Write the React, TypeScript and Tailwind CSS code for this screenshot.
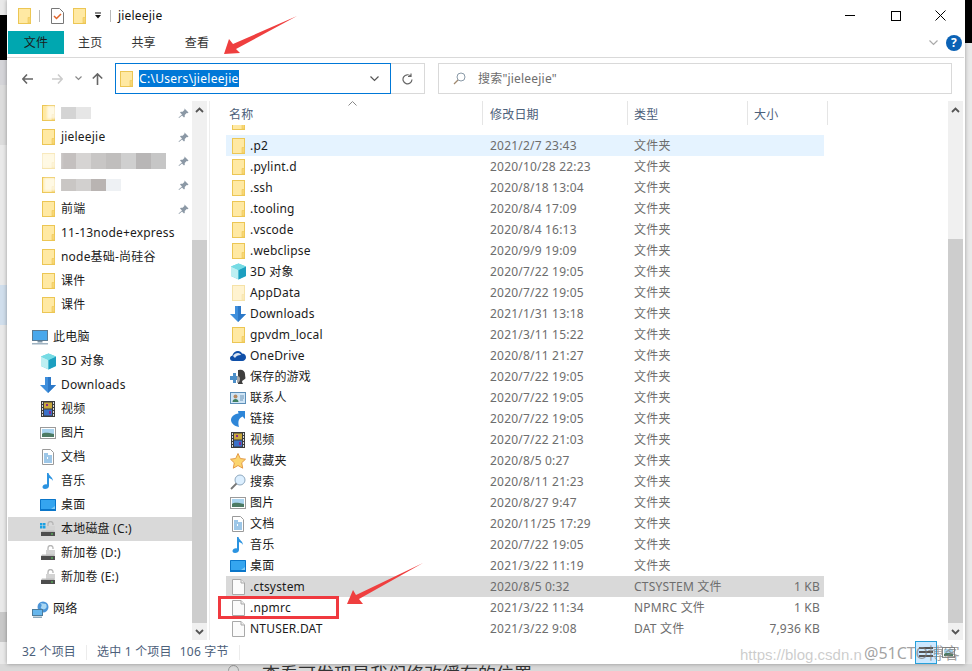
import React from "react";

const Folder = ({ faded = false }: { faded?: boolean }) => (
  <svg width="13" height="16" viewBox="0 0 13 16" className={faded ? "opacity-50" : ""}>
    <rect x="0.5" y="0.5" width="12" height="15" fill="#ffe9a3" stroke="#ecc654" />
    <path d="M10 15V9.5h2.5V15z" fill="#f8d775" stroke="#ecc654" strokeWidth="0.6" />
  </svg>
);
const FileIc = () => (
  <svg width="13" height="16" viewBox="0 0 13 16">
    <path d="M.5.5h8.5l3.5 3.5v11.500H.5z" fill="#fbfbfb" stroke="#a9a9a9" />
    <path d="M9 .5V4h3.500" fill="#eee" stroke="#a9a9a9" />
  </svg>
);
const Cube = () => (
  <svg width="17" height="17" viewBox="0 0 17 17">
    <path d="M8.500.5 16 3.500v9.500l-7.500 3.500L1 13V3.500z" fill="#5ed0de" />
    <path d="M1 3.500 8.500 7v9.500L1 13z" fill="#bdeff2" />
    <path d="M8.500 7 16 3.500V13l-7.500 3.500z" fill="#1c9fc0" />
    <path d="M8.500.5 16 3.500 8.500 7 1 3.500z" fill="#76dbe4" />
  </svg>
);
const Download = () => (
  <svg width="16" height="16" viewBox="0 0 16 16">
    <path d="M5 0h6v8h5l-8 8-8-8h5z" fill="#3f8fdc" />
    <path d="M8 0h3v8h5l-8 8z" fill="#2c78c8" />
  </svg>
);
const Film = () => (
  <svg width="14" height="16" viewBox="0 0 14 16">
    <rect width="14" height="16" fill="#3c3c3c" />
    <rect x="3" y="1.500" width="8" height="6" fill="#c9a83c" />
    <rect x="3" y="8.500" width="8" height="6" fill="#3c70c8" />
    <path d="M5 3h2v2H5zM8 10h2v3H8z" fill="#8a2a8a" />
    <path d="M1 1h1v2H1zm0 3h1v2H1zm0 3h1v2H1zm0 3h1v2H1zm0 3h1v2H1zM12 1h1v2h-1zm0 3h1v2h-1zm0 3h1v2h-1zm0 3h1v2h-1zm0 3h1v2h-1z" fill="#ddd" />
  </svg>
);
const Pic = () => (
  <svg width="16" height="12" viewBox="0 0 16 12">
    <rect x="0.500" y="0.500" width="15" height="11" fill="#fff" stroke="#9a9a9a" />
    <rect x="2" y="2" width="12" height="8" fill="#a9d3ee" />
    <path d="M2 7c3-2 6-1 12 0v3H2z" fill="#4c7a63" />
  </svg>
);
const Doc = () => (
  <svg width="12" height="16" viewBox="0 0 12 16">
    <path d="M.5.5h8l3 3v12H.5z" fill="#fff" stroke="#9a9a9a" />
    <path d="M2 5h4M2 7h8M2 9h3M6 9h4M2 11h8M2 13h8" stroke="#3d8fd0" />
  </svg>
);
const Music = () => (
  <svg width="12" height="16" viewBox="0 0 12 16">
    <path d="M5 0h1.500c.5 3 4.500 4 4.500 8-1-2-2.500-2.500-4-3v8c0 2-2 3-4 3-1.500 0-2.500-.8-2.500-2 0-2 2.500-3.200 4.500-2.600z" fill="#2b93e0" />
  </svg>
);
const Desk = () => (
  <svg width="16" height="12" viewBox="0 0 16 12">
    <rect width="16" height="12" rx="0.500" fill="#0a76c9" />
    <rect x="1" y="1" width="14" height="9" fill="#35a5ef" />
    <path d="M11 10h4V7z" fill="#7fcaf5" />
  </svg>
);
const Computer = () => (
  <svg width="16" height="15" viewBox="0 0 16 15">
    <rect x="0.500" y="0.500" width="15" height="10" fill="#49a8ec" stroke="#5b7a92" />
    <rect x="5.500" y="11" width="5" height="1.500" fill="#7b93a5" />
    <rect y="13" width="16" height="1.500" fill="#9fb3c2" />
  </svg>
);
const Drive = ({ win = false }: { win?: boolean }) => (
  <svg width="16" height="16" viewBox="0 0 16 16">
    {win ? (
      <path d="M0 2h2.500v2.500H0zM3 2h2.500v2.500H3zM0 5h2.500v2.500H0zM3 5h2.500v2.500H3z" fill="#19a0e3" />
    ) : null}
    <path d="M8 6V3a2.500 2.500 0 0 1 5 0v1" fill="none" stroke="#b5b5b5" strokeWidth="1.300" />
    <rect x="6" y="5" width="9" height="5" fill="#d3d3d3" />
    <path d="M1 11h14v4H1z" fill="#4d4d4d" />
    <path d="M2 9.500h12l1 1.500H1z" fill="#bdbdbd" />
    <rect x="11" y="12.500" width="2" height="1" fill="#5ed25e" />
  </svg>
);
const Network = () => (
  <svg width="17" height="17" viewBox="0 0 17 17">
    <circle cx="11" cy="6" r="5.500" fill="#4a94d8" />
    <path d="M8 2c2 1 2 3 1 4s2 3 4 2 2-3 1-5z" fill="#a9d7f3" />
    <rect x="0.500" y="8.500" width="10" height="6" fill="#66b6ec" stroke="#4d7c9c" />
    <rect x="1" y="15.500" width="9" height="1.500" fill="#8da9bb" />
  </svg>
);
const Cloud = () => (
  <svg width="16" height="11" viewBox="0 0 16 11">
    <path d="M3 11C1 11 0 9.800 0 8.300 0 6.800 1 6 2.300 5.800 3 3 5.300 1 8 1c2 0 3.400 1 4 2.500 2.300 0 4 1.500 4 3.800 0 2-1.500 3.700-3.700 3.700z" fill="#0f4fa8" />
    <path d="M3 6c1-2 3-3 5-3 1.500 0 2.700 1 3 2-3 0-5 1-6 3z" fill="#fff" opacity="0.850" />
  </svg>
);
const Games = () => (
  <svg width="16" height="16" viewBox="0 0 16 16">
    <path d="M0 7h3V4h3v3h2v4H6v3H3v-3H0z" fill="#4c8fc9" />
    <path d="M9 1c3-1 6 1 6 4s1 4 0 5-3 1-3 3l1 2H8V1z" fill="#3f3f3f" />
    <path d="M7 7c2 0 3 1 3 3s-1 4-3 4z" fill="#a9a9a9" />
  </svg>
);
const Contact = () => (
  <svg width="16" height="12" viewBox="0 0 16 12">
    <rect x="0.500" y="0.500" width="15" height="11" fill="#cfe5f6" stroke="#5d8fb8" />
    <circle cx="5.500" cy="4.500" r="2" fill="#b58a64" />
    <path d="M2.500 10c0-2 1.500-3 3-3s3 1 3 3z" fill="#3f7f5f" />
    <path d="M10 4h4M10 6h4M10 8h3" stroke="#6c93b5" />
  </svg>
);
const LinkIc = () => (
  <svg width="14" height="16" viewBox="0 0 14 16">
    <path d="M7 0h7v8l-2.500-2.500C8 7 6.500 10 8 16 3 15 0 12 0 9c0-3 3-6 7.500-6.500z" fill="#2e86d8" />
  </svg>
);
const Star = () => (
  <svg width="16" height="16" viewBox="0 0 16 16">
    <path d="m8 .5 2.300 5 5.200.7-3.800 3.600 1 5.400L8 12.500l-4.700 2.700 1-5.400L.5 6.200l5.200-.7z" fill="#fbd56f" stroke="#e49a47" />
  </svg>
);
const Lens = () => (
  <svg width="16" height="16" viewBox="0 0 16 16">
    <circle cx="10" cy="6" r="5" fill="#dcefff" stroke="#8fa9bf" />
    <path d="M6.500 9.500 1 15" stroke="#777" strokeWidth="1.800" />
  </svg>
);

type Row = { i: React.ReactNode; n: string; d: string; t: string; s?: string; bg?: string };
const f = <Folder />;
const rows: Row[] = [
  { i: f, n: ".p2", d: "2021/2/7 23:43", t: "文件夹", bg: "bg-[#e5f3ff]" },
  { i: f, n: ".pylint.d", d: "2020/10/28 22:23", t: "文件夹" },
  { i: f, n: ".ssh", d: "2020/8/18 13:04", t: "文件夹" },
  { i: f, n: ".tooling", d: "2020/8/4 17:09", t: "文件夹" },
  { i: f, n: ".vscode", d: "2020/8/4 16:13", t: "文件夹" },
  { i: f, n: ".webclipse", d: "2020/9/9 19:09", t: "文件夹" },
  { i: <Cube />, n: "3D 对象", d: "2020/7/22 19:05", t: "文件夹" },
  { i: <Folder faded />, n: "AppData", d: "2020/7/22 19:05", t: "文件夹" },
  { i: <Download />, n: "Downloads", d: "2021/1/31 13:18", t: "文件夹" },
  { i: f, n: "gpvdm_local", d: "2021/3/11 15:22", t: "文件夹" },
  { i: <Cloud />, n: "OneDrive", d: "2020/8/11 21:27", t: "文件夹" },
  { i: <Games />, n: "保存的游戏", d: "2020/7/22 19:05", t: "文件夹" },
  { i: <Contact />, n: "联系人", d: "2020/7/22 19:05", t: "文件夹" },
  { i: <LinkIc />, n: "链接", d: "2020/7/22 19:05", t: "文件夹" },
  { i: <Film />, n: "视频", d: "2020/7/22 21:03", t: "文件夹" },
  { i: <Star />, n: "收藏夹", d: "2020/8/5 0:27", t: "文件夹" },
  { i: <Lens />, n: "搜索", d: "2020/8/11 21:23", t: "文件夹" },
  { i: <Pic />, n: "图片", d: "2020/8/27 9:47", t: "文件夹" },
  { i: <Doc />, n: "文档", d: "2020/11/25 17:29", t: "文件夹" },
  { i: <Music />, n: "音乐", d: "2020/7/22 19:05", t: "文件夹" },
  { i: <Desk />, n: "桌面", d: "2021/3/22 11:19", t: "文件夹" },
  { i: <FileIc />, n: ".ctsystem", d: "2020/8/5 0:32", t: "CTSYSTEM 文件", s: "1 KB", bg: "bg-[#d9d9d9]" },
  { i: <FileIc />, n: ".npmrc", d: "2021/3/22 11:34", t: "NPMRC 文件", s: "1 KB" },
  { i: <FileIc />, n: "NTUSER.DAT", d: "2021/3/22 9:08", t: "DAT 文件", s: "7,936 KB" },
];

const Pin = () => (
  <svg width="11" height="11" viewBox="0 0 11 11" className="ml-auto mr-[3px]">
    <path d="M6.500.5l4 4-1 .7-.8-.3-2 2 .1 1.800-.8.800-2-2L1 10 .5 9.500l3.500-3-2-2 .8-.8 1.800.1 2-2-.3-.8z" fill="#8b98a5" />
  </svg>
);
const Patch = ({ c, h }: { c: string[]; h: string }) => (
  <div className={`flex ${h}`}>
    {c.map((x, i) => (
      <div key={i} className="w-[15px] h-full" style={{ background: x }} />
    ))}
  </div>
);

const NavRow = ({ icon, label, pin, sel, top }: { icon: React.ReactNode; label?: React.ReactNode; pin?: boolean; sel?: boolean; top?: boolean }) => (
  <div className={`relative h-6 flex items-center shrink-0 ml-px ${top ? "pl-[24px]" : "pl-[32px]"} ${sel ? "bg-[#d9d9d9]" : ""}`}>
    <div className="w-[16px] flex justify-center shrink-0 [&>svg]:shrink-0">{icon}</div>
    <div className="ml-[5px] whitespace-nowrap">{label}</div>
    {pin ? <Pin /> : null}
  </div>
);

const Chevron = ({ up }: { up?: boolean }) => (
  <svg width="9" height="6" viewBox="0 0 9 6">
    <path d={up ? "M1 5l3.500-3.500L8 5" : "M1 1l3.500 3.500L8 1"} fill="none" stroke="#555" strokeWidth="1.800" />
  </svg>
);

export default function App() {
  return (
    <div
      className="relative w-[972px] h-[671px] overflow-hidden bg-[#e9e9e9] text-[12px] tracking-[0.2px] text-[#1b1b1b]"
      style={{ fontFamily: '"Noto Sans","Noto Sans CJK SC",sans-serif' }}
    >
      {/* what lies behind the window */}
      <div className="absolute left-0 top-[15px] w-[7px] h-[45px] bg-black" />
      <div className="absolute left-0 top-[60px] w-[7px] h-[25px] bg-[#d4d4d8]" />
      <div className="absolute left-0 top-[85px] w-[7px] h-[60px] bg-[#dcdcdc]" />
      <div className="absolute left-0 top-[285px] w-[7px] h-[40px] bg-[#d0deec]" />
      <div className="absolute left-0 top-[612px] w-[7px] h-[30px] bg-[#c8c8c8]" />
      <div className="absolute right-0 top-0 w-[7px] h-[43px] bg-black" />
      <div className="absolute left-0 right-0 bottom-0 h-[7px] bg-[#d9d9d9]" />
      <div className="absolute left-[228px] top-[665px] w-[11px] h-[11px] rounded-full border border-[#9a9a9a]" />
      <div className="absolute left-[262px] top-[662px] text-[18px] leading-[24px] tracking-normal whitespace-nowrap text-[#333]">查看可发现是我们修改缓存的位置</div>

      <div className="relative ml-[7px] w-[958px] h-[664px] bg-white shadow-[0_0_4px_rgba(0,0,0,0.35)] flex flex-col">
        {/* title bar */}
        <div className="h-[31px] flex items-center pl-[11px] shrink-0">
          <Folder />
          <div className="ml-[8px] w-px h-[12px] bg-[#b9b9b9]" />
          <svg width="13" height="16" viewBox="0 0 13 16" className="ml-[11px]">
            <path d="M.5.5h8l4 4v11H.5z" fill="#fff" stroke="#777" />
            <path d="M3 8l2.500 2.500L10 6" fill="none" stroke="#e0642a" strokeWidth="1.500" />
          </svg>
          <div className="ml-[9px]"><Folder /></div>
          <svg width="8" height="8" viewBox="0 0 8 8" className="ml-[8px]">
            <path d="M1 1h6" stroke="#111" />
            <path d="M1 3h6L4 6.500z" fill="#111" />
          </svg>
          <div className="ml-[8px] w-px h-[12px] bg-[#b9b9b9]" />
          <div className="ml-[7px] text-[#111]">jieleejie</div>
          <div className="ml-auto flex items-center">
            <div className="w-[46px] flex justify-center"><div className="w-[10px] h-px bg-black" /></div>
            <div className="w-[45px] flex justify-center"><div className="w-[10px] h-[10px] border border-black" /></div>
            <div className="w-[45px] flex justify-center mr-[2px]">
              <svg width="11" height="11" viewBox="0 0 11 11"><path d="M.5.5l10 10M10.500.5l-10 10" stroke="#000" /></svg>
            </div>
          </div>
        </div>
        {/* ribbon */}
        <div className="h-[27px] flex items-start shrink-0 border-b border-[#d9d9d9] mr-[1px]">
          <div className="ml-px w-[56px] h-[23px] bg-[#00a7b0] flex items-center justify-center">文件</div>
          <div className="h-[23px] flex items-center ml-[14px] text-[#333]">主页</div>
          <div className="h-[23px] flex items-center ml-[29px] text-[#333]">共享</div>
          <div className="h-[23px] flex items-center ml-[29px] text-[#333]">查看</div>
          <div className="ml-auto mr-[2px] h-[23px] flex items-center gap-[8px]">
            <svg width="9" height="6" viewBox="0 0 9 6"><path d="M.5.500l4 4 4-4" fill="none" stroke="#aaa" strokeWidth="1.200" /></svg>
            <div className="w-4 h-4 rounded-full bg-[#0b62b5] text-white font-bold text-[12px] leading-4 text-center">?</div>
          </div>
        </div>
        {/* address row */}
        <div className="h-[31px] mt-[5px] flex items-center shrink-0 relative">
          <svg width="11" height="10" viewBox="0 0 11 10" className="ml-[15px]"><path d="M5 .500.8 5 5 9.500M1 5h10" fill="none" stroke="#666" strokeWidth="1.600" /></svg>
          <svg width="11" height="10" viewBox="0 0 11 10" className="ml-[19px]"><path d="M6 .500 10.200 5 6 9.500M10 5H0" fill="none" stroke="#ccc" strokeWidth="1.600" /></svg>
          <svg width="7" height="5" viewBox="0 0 7 5" className="ml-[12px]"><path d="M.5.500l3 3 3-3" fill="none" stroke="#888" strokeWidth="1.200" /></svg>
          <svg width="11" height="12" viewBox="0 0 11 12" className="ml-[10px]"><path d="M.8 5.500 5.500.9l4.700 4.600M5.500 1v11" fill="none" stroke="#666" strokeWidth="1.600" /></svg>
          <div className="ml-[12px] w-[276px] h-[31px] border border-[#0078d7] flex items-center pl-[4px]">
            <Folder />
            <div className="ml-[6px] bg-[#0078d7] text-white leading-[17px] tracking-[0.3px]">C:\Users\jieleejie</div>
            <svg width="9" height="6" viewBox="0 0 9 6" className="ml-auto mr-[11px]"><path d="M.5.500l4 4 4-4" fill="none" stroke="#555" strokeWidth="1.200" /></svg>
          </div>
          <div className="w-[34px] h-[31px] border border-l-0 border-[#d9d9d9] flex items-center justify-center">
            <svg width="11" height="12" viewBox="0 0 11 12"><path d="M8.800 3.200A4.500 4.500 0 1 0 10 6.500M9 .5v3H6" fill="none" stroke="#666" strokeWidth="1.200" /></svg>
          </div>
          <div className="ml-[13px] w-[514px] h-[31px] border border-[#d9d9d9] flex items-center pl-[14px] text-[#6d6d6d]">
            <svg width="13" height="13" viewBox="0 0 13 13"><circle cx="8" cy="5" r="4" fill="none" stroke="#8a9aa8" /><path d="M5 8l-4 4" stroke="#a08a70" strokeWidth="1.300" /></svg>
            <span className="ml-[12px]">搜索"jieleejie"</span>
          </div>
        </div>
        {/* body */}
        <div className="flex-1 min-h-0 flex mt-[7px]">
          <div className="w-[185px] shrink-0 overflow-hidden">
            <NavRow icon={<Folder />} label={<Patch h="h-[12px]" c={["#d4d4d4", "#e6e6e6"]} />} pin />
            <NavRow icon={<Folder />} label="jieleejie" pin />
            <NavRow icon={<Folder />} label={<Patch h="h-[16px] blur-[0.6px]" c={["#c4c0bf", "#d6d4d3", "#c8c6c5", "#c0bebd", "#cfcfcf", "#b8b6b6", "#c6c6c6"]} />} pin />
            <NavRow icon={<Folder />} label={<Patch h="h-[12px] blur-[0.6px]" c={["#c9c6c4", "#d2d0cf", "#b9b4b2", "#eef1f4"]} />} pin />
            <NavRow icon={<Folder />} label="前端" pin />
            <NavRow icon={<Folder />} label="11-13node+express" />
            <NavRow icon={<Folder />} label="node基础-尚硅谷" />
            <NavRow icon={<Folder />} label="课件" />
            <NavRow icon={<Folder />} label="课件" />
            <div className="h-2" />
            <NavRow top icon={<Computer />} label="此电脑" />
            <NavRow icon={<Cube />} label="3D 对象" />
            <NavRow icon={<Download />} label="Downloads" />
            <NavRow icon={<Film />} label="视频" />
            <NavRow icon={<Pic />} label="图片" />
            <NavRow icon={<Doc />} label="文档" />
            <NavRow icon={<Music />} label="音乐" />
            <NavRow icon={<Desk />} label="桌面" />
            <NavRow sel icon={<Drive win />} label="本地磁盘 (C:)" />
            <NavRow icon={<Drive />} label="新加卷 (D:)" />
            <NavRow icon={<Drive />} label="新加卷 (E:)" />
            <div className="h-2" />
            <NavRow top icon={<Network />} label="网络" />
          </div>
          {/* nav scrollbar */}
          <div className="w-[15px] shrink-0 bg-[#f0f0f0] flex flex-col h-[539px]">
            <div className="h-[17px] flex items-center justify-center"><Chevron up /></div>
            <div className="h-[122px]" />
            <div className="flex-1 bg-[#cdcdcd]" />
            <div className="h-[17px] flex items-center justify-center"><Chevron /></div>
          </div>
          <div className="w-[3px] shrink-0 border-r border-[#ededed]" />
          {/* file list */}
          <div className="flex-1 min-w-0 flex flex-col h-[539px] relative">
            <div className="h-[24px] flex items-center shrink-0 text-[#4c607a]">
              <div className="w-[273px] pl-[19px] pt-[3px] h-full flex items-center border-r border-[#e5e5e5] relative">
                名称
                <svg width="9" height="5" viewBox="0 0 9 5" className="absolute left-[138px] top-0"><path d="M.5 4.500l4-4 4 4" fill="none" stroke="#888" /></svg>
              </div>
              <div className="w-[145px] pl-[7px] pt-[3px] h-full flex items-center border-r border-[#e5e5e5]">修改日期</div>
              <div className="w-[120px] pl-[6px] pt-[3px] h-full flex items-center border-r border-[#e5e5e5]">类型</div>
              <div className="w-[80px] pl-[6px] pt-[3px] h-full flex items-center border-r border-[#e5e5e5]">大小</div>
            </div>
            <div className="h-[10px] shrink-0 overflow-hidden relative">
              <div className="absolute left-[22px] -top-[11px]"><Folder /></div>
            </div>
            {rows.map((r) => (
              <div key={r.n} className={`h-[21px] shrink-0 flex items-center ml-[16px] w-[598px] ${r.bg ?? ""}`}>
                <div className="w-[24px] flex justify-center [&>svg]:shrink-0">{r.i}</div>
                <div className="w-[240px] whitespace-nowrap">{r.n}</div>
                <div className="w-[144px] text-[#6d6d6d] whitespace-nowrap">{r.d}</div>
                <div className="w-[110px] text-[#6d6d6d] whitespace-nowrap">{r.t}</div>
                <div className="w-[76px] text-right text-[#6d6d6d] whitespace-nowrap">{r.s}</div>
              </div>
            ))}
          </div>
          {/* list scrollbar */}
          <div className="w-[15px] shrink-0 bg-[#f0f0f0] flex flex-col h-[539px] mr-[2px]">
            <div className="h-[17px] flex items-center justify-center"><Chevron up /></div>
            <div className="h-[121px]" />
            <div className="flex-1 bg-[#cdcdcd]" />
            <div className="h-[17px] flex items-center justify-center"><Chevron /></div>
          </div>
        </div>
        {/* status */}
        <div className="h-[24px] shrink-0 flex items-center pl-[15px] text-[#4c607a]">
          <span>32 个项目</span>
          <div className="ml-[10px] w-px h-[15px] bg-[#ececec]" />
          <span className="ml-[10px]">选中 1 个项目</span>
          <span className="ml-[8px]">106 字节</span>
          <div className="ml-[10px] w-px h-[15px] bg-[#ececec]" />
          <div className="ml-auto mr-[10px] flex items-center gap-[5px]">
            <div className="w-[22px] h-[23px] bg-[#cce8ff] border border-[#26a0da] flex flex-col justify-center gap-[2px] items-center">
              <div className="w-[14px] h-[2px] bg-[#555]" /><div className="w-[14px] h-[2px] bg-[#555]" /><div className="w-[14px] h-[2px] bg-[#555]" />
            </div>
            <svg width="13" height="11" viewBox="0 0 13 11">
              <rect x="0.500" y="0.500" width="12" height="10" fill="#fff" stroke="#8a8a8a" />
              <path d="M2 7c3-2 5-1 9 0v2H2z" fill="#4c7a63" />
              <rect x="2" y="2" width="9" height="4" fill="#a9d3ee" />
            </svg>
          </div>
        </div>
      </div>

      {/* annotations and watermark, lying over the window */}
      <div className="absolute left-[36px] top-[151px] w-[24px] h-[19px] bg-white/70 blur-[2px]" />
      <div className="absolute left-[44px] top-[178px] w-[16px] h-[13px] bg-white/70 blur-[1px]" />
      <div className="absolute left-[47px] top-[106px] w-[13px] h-[13px] bg-white/70 blur-[1px]" />
      <div className="absolute left-[218px] top-[596px] w-[121px] h-[23px] border-[3px] border-[#f0393f]" />
      <svg className="absolute left-0 top-0 pointer-events-none" width="972" height="671">
        <path d="M297 16 233 44l-4-5-5 15 16-1-4-4z" fill="#ef3f3f" />
        <path d="M423 563 356 595l-3-5-6 14 16 0-4-5z" fill="#ef3f3f" />
      </svg>
      <div className="absolute left-[740px] top-[644px] text-[15px] tracking-normal text-[#9a9a9a]/50 whitespace-nowrap" style={{ fontFamily: '"Liberation Sans",sans-serif' }}>https://blog.csdn.n</div>
      <div className="absolute left-[864px] top-[641px] text-[16px] tracking-normal text-[#7a7a7a]/70 whitespace-nowrap">@51CTO博客</div>
    </div>
  );
}
